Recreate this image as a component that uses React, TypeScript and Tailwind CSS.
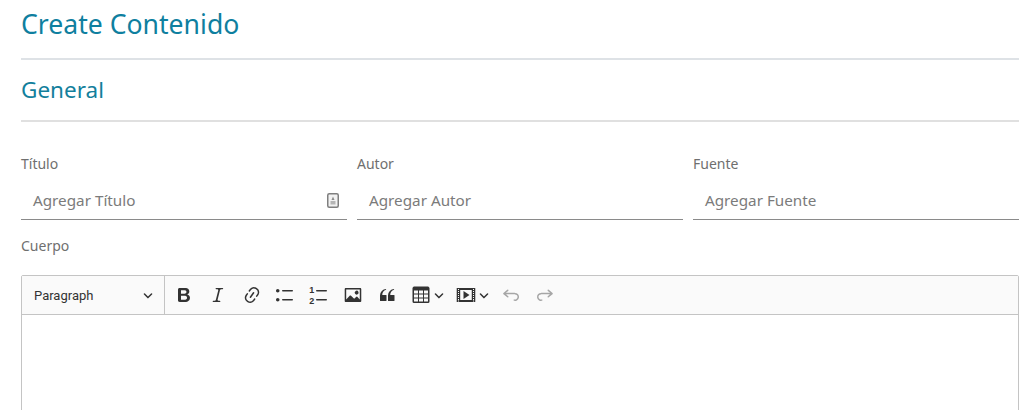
import React from 'react';

const sans = "font-['Noto_Sans',sans-serif]";

const Icon = ({ d, className = 'text-[#333]' }: { d: string; className?: string }) => (
  <svg viewBox="0 0 20 20" className={`h-5 w-5 shrink-0 fill-current ${className}`}>
    <path d={d} fillRule="evenodd" />
  </svg>
);

const Chevron = () => (
  <svg viewBox="0 0 10 10" className="h-[10px] w-[10px] shrink-0 fill-current text-[#333]">
    <path d="M.941 4.523a.75.75 0 1 1 1.06-1.06l3.006 3.005 3.005-3.005a.75.75 0 1 1 1.06 1.06l-3.549 3.55a.75.75 0 0 1-1.168-.136L.941 4.523z" />
  </svg>
);

const bold = 'M10.187 17H5.773c-.637 0-1.092-.138-1.364-.415-.273-.277-.409-.718-.409-1.323V4.738c0-.617.14-1.062.419-1.332.279-.27.73-.406 1.354-.406h4.68c.69 0 1.288.041 1.793.124.506.083.96.242 1.36.478.341.197.644.447.906.75a3.262 3.262 0 0 1 .808 2.162c0 1.401-.722 2.426-2.167 3.075C15.05 10.175 16 11.315 16 13.01a3.756 3.756 0 0 1-2.296 3.504 6.1 6.1 0 0 1-1.517.377c-.571.073-1.238.11-2 .11zm-.217-6.217H7v4.087h3.069c1.977 0 2.965-.69 2.965-2.072 0-.707-.256-1.22-.768-1.537-.512-.319-1.277-.478-2.296-.478zM7 5.13v3.619h2.606c.729 0 1.292-.067 1.69-.2a1.6 1.6 0 0 0 .91-.765c.165-.267.247-.566.247-.897 0-.707-.26-1.176-.778-1.409-.519-.232-1.31-.348-2.375-.348H7z';
const italic = 'm9.586 14.633.021.004c-.036.335.095.655.393.962.082.083.173.15.274.201h1.474a.6.6 0 1 1 0 1.2H5.304a.6.6 0 0 1 0-1.2h1.15c.474-.07.809-.182 1.005-.334.157-.122.291-.32.404-.597l2.416-9.55a1.053 1.053 0 0 0-.281-.823 1.12 1.12 0 0 0-.442-.296H8.15a.6.6 0 0 1 0-1.2h6.443a.6.6 0 1 1 0 1.2h-1.195c-.376.056-.65.155-.823.296-.215.175-.423.439-.623.79l-2.366 9.347z';
const link = 'm11.077 15 .991-1.416a.75.75 0 1 1 1.229.86l-1.148 1.64a.748.748 0 0 1-.217.206 5.251 5.251 0 0 1-8.503-5.955.741.741 0 0 1 .12-.274l1.147-1.639a.75.75 0 1 1 1.228.86L4.933 10.7l.006.003a3.75 3.75 0 0 0 6.132 4.294l.006.004zm5.494-5.335a.748.748 0 0 1-.12.274l-1.147 1.639a.75.75 0 1 1-1.228-.86l.86-1.23a3.75 3.75 0 0 0-6.144-4.301l-.86 1.229a.75.75 0 0 1-1.229-.86l1.148-1.64a.748.748 0 0 1 .217-.206 5.251 5.251 0 0 1 8.503 5.955zm-4.563-2.532a.75.75 0 0 1 .184 1.045l-3.155 4.505a.75.75 0 1 1-1.229-.86l3.155-4.506a.75.75 0 0 1 1.045-.184z';
const bullets = 'M7 5.75c0 .414.336.75.75.75h9.5a.75.75 0 1 0 0-1.5h-9.5a.75.75 0 0 0-.75.75zm-6 0C1 4.784 1.777 4 2.75 4c.966 0 1.75.777 1.75 1.75 0 .966-.777 1.75-1.75 1.75C1.784 7.5 1 6.723 1 5.75zm6 9c0 .414.336.75.75.75h9.5a.75.75 0 1 0 0-1.5h-9.5a.75.75 0 0 0-.75.75zm-6 0c0-.966.777-1.75 1.75-1.75.966 0 1.75.777 1.75 1.75 0 .966-.777 1.75-1.75 1.75-.966 0-1.75-.777-1.75-1.75z';
const image = 'M6.91 10.54c.26-.23.64-.21.88.03l3.36 3.14 2.23-2.06a.64.64 0 0 1 .87 0l2.52 2.97V4.5H3.2v10.12l3.71-4.08zm10.27-7.51c.6 0 1.09.47 1.09 1.05v11.84c0 .59-.49 1.06-1.09 1.06H2.79c-.6 0-1.09-.47-1.09-1.06V4.08c0-.58.49-1.05 1.1-1.05h14.38zm-5.22 5.56a1.96 1.96 0 1 1 3.4-1.96 1.96 1.96 0 0 1-3.4 1.96z';
const quote = 'M3 10.423a6.5 6.5 0 0 1 6.056-6.408l.038.67C6.448 5.423 5.354 7.663 5.22 10H9c.552 0 .5.432.5.986v4.511c0 .554-.448.503-1 .503h-5c-.552 0-.5-.449-.5-1.003v-4.574zm8 0a6.5 6.5 0 0 1 6.056-6.408l.038.67c-2.646.739-3.74 2.979-3.873 5.315H17c.552 0 .5.432.5.986v4.511c0 .554-.448.503-1 .503h-5c-.552 0-.5-.449-.5-1.003v-4.574z';
const table = 'M3 5.5v3h4v-3H3zm0 4v3h4v-3H3zm0 4v3h4v-3H3zm5 3h4v-3H8v3zm5 0h4v-3h-4v3zm4-4v-3h-4v3h4zm0-4v-3h-4v3h4zm1.5 8A1.5 1.5 0 0 1 17 18H3a1.5 1.5 0 0 1-1.5-1.5V3c.222-.863 1.068-1.5 2-1.5h13c.932 0 1.778.637 2 1.5v13.5zM12 8.5v-3H8v3h4zm0 1H8v3h4v-3z';
const media = 'M18.68 3.03c.6 0 .59-.03.59.55v12.84c0 .59.01.55-.59.55H1.29c-.6 0-.59.04-.59-.55V3.58c0-.58-.01-.55.6-.55h17.38zM15.77 15V5H4.2v10h11.57zM2 4v1h1V4H2zm0 2v1h1V6H2zm0 2v1h1V8H2zm0 2v1h1v-1H2zm0 2v1h1v-1H2zm0 2v1h1v-1H2zm0 1.5v1h1v-1H2zM17 4v1h1V4h-1zm0 2v1h1V6h-1zm0 2v1h1V8h-1zm0 2v1h1v-1h-1zm0 2v1h1v-1h-1zm0 2v1h1v-1h-1zm0 1.5v1h1v-1h-1zM7.5 6l6 4-6 4V6z';
const undo = 'm5.042 9.367 2.189 1.837a.75.75 0 0 1-.965 1.149l-3.788-3.18a.747.747 0 0 1-.21-.284.75.75 0 0 1 .17-.945L6.23 4.762a.75.75 0 1 1 .964 1.15L4.863 7.866h8.917A.75.75 0 0 1 14 7.9a4 4 0 1 1-1.477 7.718l.344-1.489a2.5 2.5 0 1 0 1.094-4.73l.008-.032H5.042z';
const redo = 'm14.958 9.367-2.189 1.837a.75.75 0 0 0 .965 1.149l3.788-3.18a.747.747 0 0 0 .21-.284.75.75 0 0 0-.17-.945L13.77 4.762a.75.75 0 1 0-.964 1.15l2.331 1.954H6.22A.75.75 0 0 0 6 7.9a4 4 0 1 0 1.477 7.718l-.344-1.489A2.5 2.5 0 1 1 6.039 9.4l-.008-.032h8.927z';

const NumberedIcon = () => (
  <svg viewBox="0 0 20 20" className="h-5 w-5 shrink-0 fill-current text-[#333]">
    <path d="M7 5.75c0 .414.336.75.75.75h9.5a.75.75 0 1 0 0-1.5h-9.5a.75.75 0 0 0-.75.75zm0 9c0 .414.336.75.75.75h9.5a.75.75 0 1 0 0-1.5h-9.5a.75.75 0 0 0-.75.75z" />
    <text x="2.8" y="8" fontSize="9" fontWeight="700" textAnchor="middle" fontFamily="'Liberation Sans', sans-serif">1</text>
    <text x="2.8" y="18.5" fontSize="9" fontWeight="700" textAnchor="middle" fontFamily="'Liberation Sans', sans-serif">2</text>
  </svg>
);

const InputBadge = () => (
  <svg viewBox="0 0 12 15" className="h-[15px] w-3 shrink-0">
    <rect x="0.75" y="0.75" width="10.5" height="13.5" rx="1.5" fill="#f2f2f2" stroke="#7f7f7f" strokeWidth="1.5" />
    <path d="M6 3.5 7.5 7h-3z" fill="#8a8a8a" />
    <rect x="3.5" y="8" width="5" height="3.5" fill="#b5b5b5" />
  </svg>
);

const Field = ({ label, placeholder, badge }: { label: string; placeholder: string; badge?: boolean }) => (
  <div>
    <label className="block h-[19px] text-[14px] leading-[19px] text-[#6f6f6f]">{label}</label>
    <div className="mt-[8px] flex h-[39px] items-center justify-between border-b border-[#8a8a8a] pl-3 pr-2">
      <span className="text-[15.25px] text-[#7b7b7b]">{placeholder}</span>
      {badge && <InputBadge />}
    </div>
  </div>
);

export default function App() {
  return (
    <div className={`h-[410px] overflow-hidden bg-white pl-[21px] pr-2 ${sans}`}>
      <div className="flex h-[60px] items-center border-b-2 border-[#dee2e6] pb-[10px]">
        <h1 className="text-[26.6px] leading-8 text-[#0f7f9f]">Create Contenido</h1>
      </div>
      <div className="flex h-[62px] items-center border-b-2 border-[#e0e0e0]">
        <h2 className="text-[22.5px] leading-7 text-[#137f9c]">General</h2>
      </div>

      <div className="mt-[32px] grid grid-cols-3 gap-[10px]">
        <Field label="Título" placeholder="Agregar Título" badge />
        <Field label="Autor" placeholder="Agregar Autor" />
        <Field label="Fuente" placeholder="Agregar Fuente" />
      </div>

      <label className="mt-[16px] block h-[19px] text-[14px] leading-[19px] text-[#6f6f6f]">Cuerpo</label>

      <div className="mt-[20px] min-h-[200px] rounded-t-[2px] border border-[#c4c4c4]">
        <div className="flex h-[39px] items-center border-b border-[#c4c4c4] bg-[#fafafa]">
          <div className="flex h-full w-[143px] items-center justify-between border-r border-[#c4c4c4] pl-3 pr-[11px]">
            <span className="pt-[2px] font-['Roboto',sans-serif] text-[13px] text-[#333]">Paragraph</span>
            <Chevron />
          </div>
          <div className="ml-[9px] flex items-center gap-[13.8px]">
            <Icon d={bold} />
            <Icon d={italic} />
            <Icon d={link} />
            <Icon d={bullets} />
            <NumberedIcon />
            <Icon d={image} />
            <Icon d={quote} />
            <div className="flex w-[32px] items-center gap-[3px]">
              <Icon d={table} />
              <Chevron />
            </div>
            <div className="flex w-[31px] items-center gap-[2.5px]">
              <Icon d={media} />
              <Chevron />
            </div>
            <Icon d={undo} className="text-[#a6a6a6]" />
            <Icon d={redo} className="text-[#a6a6a6]" />
          </div>
        </div>
      </div>
    </div>
  );
}
